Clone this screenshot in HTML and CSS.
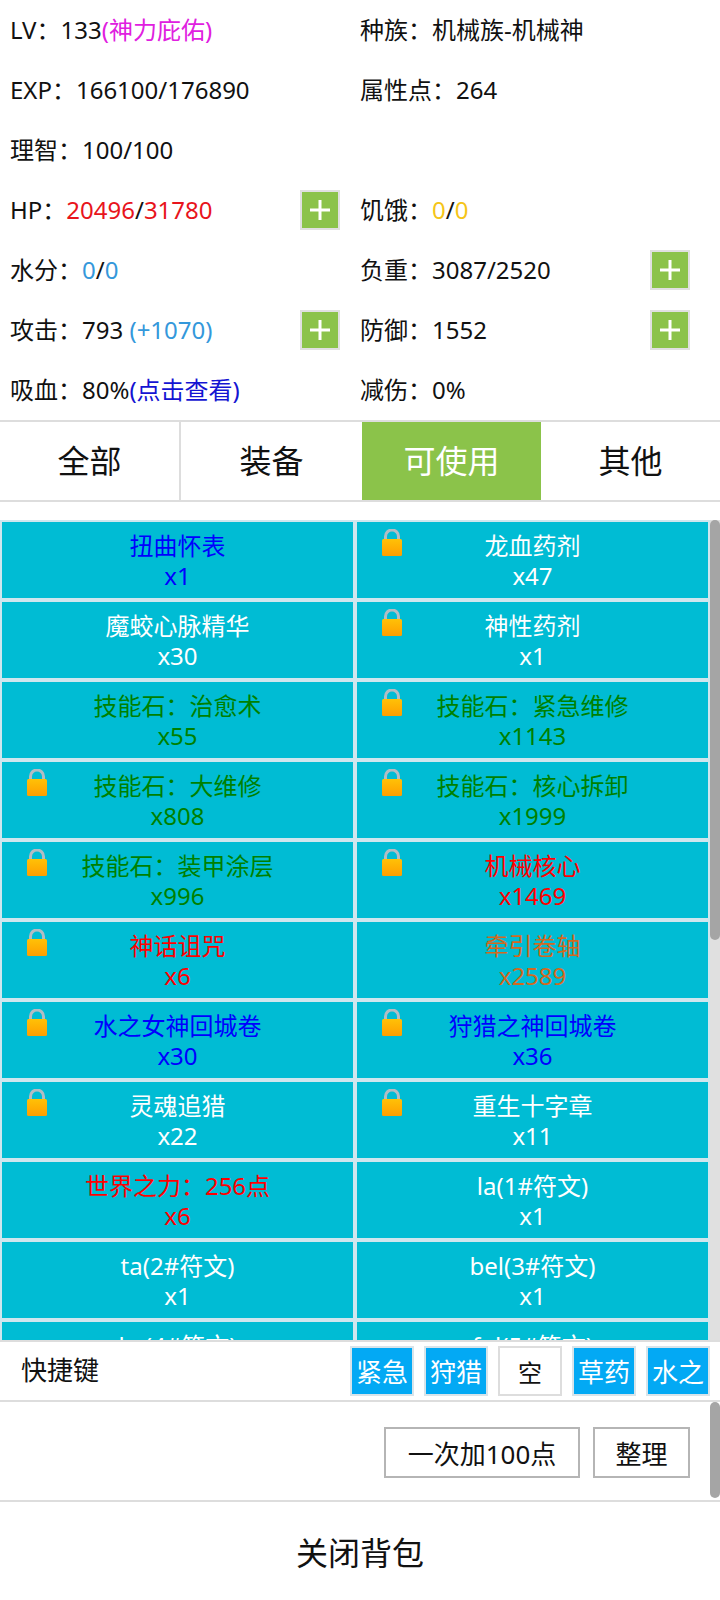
FILE: index.html
```html
<!DOCTYPE html>
<html lang="zh">
<head>
    <meta charset="UTF-8">
    <meta name="viewport" content="width=device-width, initial-scale=1.0">
    <title>背包</title>
    <link rel="stylesheet" href="styles.css">
</head>
<body>
    <svg width="0" height="0" class="defs">
        <defs>
            <linearGradient id="lock-body" x1="0" y1="0" x2="0" y2="1">
                <stop offset="0" stop-color="#ffc107"/>
                <stop offset="1" stop-color="#ff9e00"/>
            </linearGradient>
            <symbol id="lock" viewBox="0 0 20 27">
                <path d="M3.5 11V7.5a6.5 6.5 0 0 1 13 0V11" fill="none" stroke="#b4bcc2" stroke-width="3"/>
                <rect x="0" y="10" width="20" height="17" rx="1.5" fill="url(#lock-body)"/>
            </symbol>
            <symbol id="plus" viewBox="0 0 36 36">
                <path d="M18 8v20M8 18h20" stroke="#fff" stroke-width="3" fill="none"/>
            </symbol>
        </defs>
    </svg>

    <div class="stats">
        <div class="stat"><span>LV：133<span class="magenta">(神力庇佑)</span></span></div>
        <div class="stat"><span>种族：机械族-机械神</span></div>
        <div class="stat"><span>EXP：166100/176890</span></div>
        <div class="stat"><span>属性点：264</span></div>
        <div class="stat"><span>理智：100/100</span></div>
        <div class="stat"></div>
        <div class="stat">
            <span>HP：<span class="red">20496</span>/<span class="red">31780</span></span>
            <button class="plus"><svg><use href="#plus"/></svg></button>
        </div>
        <div class="stat"><span>饥饿：<span class="yellow">0</span>/<span class="yellow">0</span></span></div>
        <div class="stat"><span>水分：<span class="sky">0</span>/<span class="sky">0</span></span></div>
        <div class="stat">
            <span>负重：3087/2520</span>
            <button class="plus"><svg><use href="#plus"/></svg></button>
        </div>
        <div class="stat">
            <span>攻击：793 <span class="sky">(+1070)</span></span>
            <button class="plus"><svg><use href="#plus"/></svg></button>
        </div>
        <div class="stat">
            <span>防御：1552</span>
            <button class="plus"><svg><use href="#plus"/></svg></button>
        </div>
        <div class="stat"><span>吸血：80%<span class="navy">(点击查看)</span></span></div>
        <div class="stat"><span>减伤：0%</span></div>
    </div>

    <div class="tabs">
        <div class="tab first">全部</div>
        <div class="tab">装备</div>
        <div class="tab active">可使用</div>
        <div class="tab">其他</div>
    </div>

    <div class="list-wrap">
        <div class="list">
            <div class="item blue"><div>扭曲怀表</div><div>x1</div></div>
            <div class="item"><svg class="lock"><use href="#lock"/></svg><div>龙血药剂</div><div>x47</div></div>
            <div class="item"><div>魔蛟心脉精华</div><div>x30</div></div>
            <div class="item"><svg class="lock"><use href="#lock"/></svg><div>神性药剂</div><div>x1</div></div>
            <div class="item green"><div>技能石：治愈术</div><div>x55</div></div>
            <div class="item green"><svg class="lock"><use href="#lock"/></svg><div>技能石：紧急维修</div><div>x1143</div></div>
            <div class="item green"><svg class="lock"><use href="#lock"/></svg><div>技能石：大维修</div><div>x808</div></div>
            <div class="item green"><svg class="lock"><use href="#lock"/></svg><div>技能石：核心拆卸</div><div>x1999</div></div>
            <div class="item green"><svg class="lock"><use href="#lock"/></svg><div>技能石：装甲涂层</div><div>x996</div></div>
            <div class="item red"><svg class="lock"><use href="#lock"/></svg><div>机械核心</div><div>x1469</div></div>
            <div class="item red"><svg class="lock"><use href="#lock"/></svg><div>神话诅咒</div><div>x6</div></div>
            <div class="item orange"><div>牵引卷轴</div><div>x2589</div></div>
            <div class="item blue"><svg class="lock"><use href="#lock"/></svg><div>水之女神回城卷</div><div>x30</div></div>
            <div class="item blue"><svg class="lock"><use href="#lock"/></svg><div>狩猎之神回城卷</div><div>x36</div></div>
            <div class="item"><svg class="lock"><use href="#lock"/></svg><div>灵魂追猎</div><div>x22</div></div>
            <div class="item"><svg class="lock"><use href="#lock"/></svg><div>重生十字章</div><div>x11</div></div>
            <div class="item red"><div>世界之力：256点</div><div>x6</div></div>
            <div class="item"><div>la(1#符文)</div><div>x1</div></div>
            <div class="item"><div>ta(2#符文)</div><div>x1</div></div>
            <div class="item"><div>bel(3#符文)</div><div>x1</div></div>
            <div class="item"><div>ka(4#符文)</div></div>
            <div class="item"><div>ful(5#符文)</div></div>
        </div>
        <div class="track"><div class="thumb"></div></div>
    </div>

    <div class="hotkeys">
        <span class="hotkeys-label">快捷键</span>
        <div class="hotkeys-btns">
            <div class="key">紧急</div>
            <div class="key">狩猎</div>
            <div class="key empty">空</div>
            <div class="key">草药</div>
            <div class="key">水之</div>
        </div>
    </div>

    <div class="actions">
        <button class="action add">一次加100点</button>
        <button class="action sort">整理</button>
        <div class="actions-thumb"></div>
    </div>

    <div class="close">关闭背包</div>
</body>
</html>
```

FILE: styles.css
```css
* {
    box-sizing: border-box;
}

html, body {
    margin: 0;
    padding: 0;
}

body {
    width: 720px;
    height: 1600px;
    overflow: hidden;
    background-color: white;
    color: #111;
    font-family: 'Noto Sans', 'Noto Sans CJK SC', sans-serif;
    font-size: 24px;
}

.defs {
    position: absolute;
}

/* 属性 */
.stats {
    display: grid;
    grid-template-columns: 330px 330px;
    column-gap: 20px;
    padding: 0 30px 0 10px;
    height: 420px;
}

.stat {
    height: 60px;
    display: flex;
    align-items: center;
    justify-content: space-between;
    white-space: nowrap;
}

.stat > span {
    padding-bottom: 4px;
}

.magenta { color: #e020e0; }
.red { color: #e8141c; }
.yellow { color: #f5c518; }
.sky { color: #3498db; }
.navy { color: #1414d2; }

.plus {
    width: 40px;
    height: 40px;
    padding: 0;
    background-color: #8bc34a;
    border: 2px solid #e0e0e0;
}

.plus svg {
    display: block;
    width: 36px;
    height: 36px;
}

/* 标签 */
.tabs {
    display: grid;
    grid-template-columns: 181px 181px 179px 179px;
    height: 82px;
    border-top: 2px solid #ddd;
    border-bottom: 2px solid #ddd;
}

.tab {
    display: flex;
    align-items: center;
    justify-content: center;
    padding-bottom: 4px;
    font-size: 32px;
}

.tab.first {
    border-right: 2px solid #ddd;
}

.tab.active {
    background-color: #8bc34a;
    color: white;
}

/* 物品列表 */
.list-wrap {
    display: flex;
    margin-top: 18px;
    height: 820px;
}

.list {
    width: 710px;
    height: 820px;
    overflow: hidden;
    display: grid;
    grid-template-columns: 355px 355px;
    grid-auto-rows: 80px;
}

.item {
    position: relative;
    border: 2px solid #cfe6ee;
    background-color: #00bcd4;
    color: white;
    text-align: center;
    line-height: 30px;
    padding-top: 9px;
}

.item.blue { color: #0000ff; }
.item.green { color: #008000; }
.item.red { color: #ff0000; }
.item.orange { color: #d2691e; }

.lock {
    position: absolute;
    left: 25px;
    top: 7px;
    width: 20px;
    height: 27px;
}

.track {
    width: 10px;
    background-color: #e0e0e0;
}

.thumb {
    height: 420px;
    background-color: #a5a5a5;
    border-radius: 5px;
}

/* 快捷键 */
.hotkeys {
    display: flex;
    align-items: center;
    justify-content: space-between;
    height: 62px;
    padding: 0 10px 0 21px;
    border-top: 2px solid #ddd;
    border-bottom: 2px solid #ddd;
    background-color: white;
}

.hotkeys-label {
    padding-bottom: 4px;
    font-size: 26px;
}

.hotkeys-btns {
    display: flex;
    gap: 10px;
}

.key {
    width: 64px;
    height: 50px;
    display: flex;
    align-items: center;
    justify-content: center;
    font-size: 26px;
    background-color: #03a9f4;
    color: white;
    border: 2px solid #d8e4ea;
}

.key.empty {
    background-color: white;
    color: #111;
    font-size: 24px;
    border-color: #ddd;
}

/* 操作 */
.actions {
    position: relative;
    display: flex;
    justify-content: flex-end;
    align-items: center;
    gap: 13px;
    height: 100px;
    padding: 3px 30px 0 0;
    border-bottom: 2px solid #ddd;
}

.action {
    height: 51px;
    padding: 0;
    background-color: white;
    border: 2px solid #b5b5b5;
    color: #111;
    font-family: 'Noto Sans', 'Noto Sans CJK SC', sans-serif;
    font-size: 26px;
}

.action.add {
    width: 196px;
}

.action.sort {
    width: 97px;
}

.actions-thumb {
    position: absolute;
    right: 0;
    top: 0;
    width: 10px;
    height: 96px;
    background-color: #a5a5a5;
    border-radius: 5px;
}

.close {
    height: 98px;
    display: flex;
    align-items: center;
    justify-content: center;
    font-size: 32px;
}
```
